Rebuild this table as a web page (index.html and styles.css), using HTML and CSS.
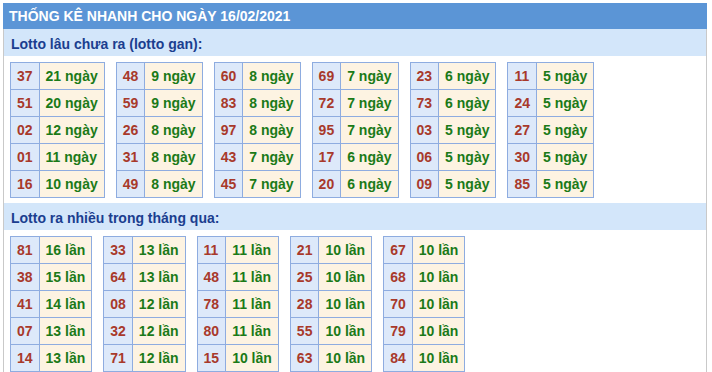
FILE: index.html
```
<!DOCTYPE html>
<html lang="vi">
<head>
    <meta charset="UTF-8">
    <title>Thống kê nhanh</title>
    <link rel="stylesheet" href="styles.css">
</head>
<body>
    <div class="box">
        <div class="box-title">THỐNG KÊ NHANH CHO NGÀY 16/02/2021</div>

        <!-- Lotto gan -->
        <div class="section-head">Lotto lâu chưa ra (lotto gan):</div>
        <div class="tables">
            <table class="stat">
                <tr><td class="num">37</td><td class="val">21 ngày</td></tr>
                <tr><td class="num">51</td><td class="val">20 ngày</td></tr>
                <tr><td class="num">02</td><td class="val">12 ngày</td></tr>
                <tr><td class="num">01</td><td class="val">11 ngày</td></tr>
                <tr><td class="num">16</td><td class="val">10 ngày</td></tr>
            </table>
            <table class="stat">
                <tr><td class="num">48</td><td class="val">9 ngày</td></tr>
                <tr><td class="num">59</td><td class="val">9 ngày</td></tr>
                <tr><td class="num">26</td><td class="val">8 ngày</td></tr>
                <tr><td class="num">31</td><td class="val">8 ngày</td></tr>
                <tr><td class="num">49</td><td class="val">8 ngày</td></tr>
            </table>
            <table class="stat">
                <tr><td class="num">60</td><td class="val">8 ngày</td></tr>
                <tr><td class="num">83</td><td class="val">8 ngày</td></tr>
                <tr><td class="num">97</td><td class="val">8 ngày</td></tr>
                <tr><td class="num">43</td><td class="val">7 ngày</td></tr>
                <tr><td class="num">45</td><td class="val">7 ngày</td></tr>
            </table>
            <table class="stat">
                <tr><td class="num">69</td><td class="val">7 ngày</td></tr>
                <tr><td class="num">72</td><td class="val">7 ngày</td></tr>
                <tr><td class="num">95</td><td class="val">7 ngày</td></tr>
                <tr><td class="num">17</td><td class="val">6 ngày</td></tr>
                <tr><td class="num">20</td><td class="val">6 ngày</td></tr>
            </table>
            <table class="stat">
                <tr><td class="num">23</td><td class="val">6 ngày</td></tr>
                <tr><td class="num">73</td><td class="val">6 ngày</td></tr>
                <tr><td class="num">03</td><td class="val">5 ngày</td></tr>
                <tr><td class="num">06</td><td class="val">5 ngày</td></tr>
                <tr><td class="num">09</td><td class="val">5 ngày</td></tr>
            </table>
            <table class="stat">
                <tr><td class="num">11</td><td class="val">5 ngày</td></tr>
                <tr><td class="num">24</td><td class="val">5 ngày</td></tr>
                <tr><td class="num">27</td><td class="val">5 ngày</td></tr>
                <tr><td class="num">30</td><td class="val">5 ngày</td></tr>
                <tr><td class="num">85</td><td class="val">5 ngày</td></tr>
            </table>
        </div>

        <!-- Lotto ra nhieu -->
        <div class="section-head">Lotto ra nhiều trong tháng qua:</div>
        <div class="tables">
            <table class="stat">
                <tr><td class="num">81</td><td class="val">16 lần</td></tr>
                <tr><td class="num">38</td><td class="val">15 lần</td></tr>
                <tr><td class="num">41</td><td class="val">14 lần</td></tr>
                <tr><td class="num">07</td><td class="val">13 lần</td></tr>
                <tr><td class="num">14</td><td class="val">13 lần</td></tr>
            </table>
            <table class="stat">
                <tr><td class="num">33</td><td class="val">13 lần</td></tr>
                <tr><td class="num">64</td><td class="val">13 lần</td></tr>
                <tr><td class="num">08</td><td class="val">12 lần</td></tr>
                <tr><td class="num">32</td><td class="val">12 lần</td></tr>
                <tr><td class="num">71</td><td class="val">12 lần</td></tr>
            </table>
            <table class="stat">
                <tr><td class="num">11</td><td class="val">11 lần</td></tr>
                <tr><td class="num">48</td><td class="val">11 lần</td></tr>
                <tr><td class="num">78</td><td class="val">11 lần</td></tr>
                <tr><td class="num">80</td><td class="val">11 lần</td></tr>
                <tr><td class="num">15</td><td class="val">10 lần</td></tr>
            </table>
            <table class="stat">
                <tr><td class="num">21</td><td class="val">10 lần</td></tr>
                <tr><td class="num">25</td><td class="val">10 lần</td></tr>
                <tr><td class="num">28</td><td class="val">10 lần</td></tr>
                <tr><td class="num">55</td><td class="val">10 lần</td></tr>
                <tr><td class="num">63</td><td class="val">10 lần</td></tr>
            </table>
            <table class="stat">
                <tr><td class="num">67</td><td class="val">10 lần</td></tr>
                <tr><td class="num">68</td><td class="val">10 lần</td></tr>
                <tr><td class="num">70</td><td class="val">10 lần</td></tr>
                <tr><td class="num">79</td><td class="val">10 lần</td></tr>
                <tr><td class="num">84</td><td class="val">10 lần</td></tr>
            </table>
        </div>
    </div>
</body>
</html>
```

FILE: styles.css
```
* {
    margin: 0;
    padding: 0;
    box-sizing: border-box;
}

body {
    font-family: Arial, "Liberation Sans", sans-serif;
    font-size: 14px;
    background-color: #fff;
    padding: 3px 0 0 3px;
}

.box {
    width: 704px;
    border-left: 1px solid #c9c9c9;
    border-right: 1px solid #c9c9c9;
}

.box-title {
    margin: 0 -1px;
    padding: 5px 6px 5px;
    line-height: 16px;
    background-color: #5b95d6;
    color: #fff;
    font-weight: bold;
}

.section-head {
    padding: 7px 7px 4px;
    line-height: 16px;
    background-color: #d3e6fa;
    color: #1b3e8f;
    font-weight: bold;
}

.tables {
    display: flex;
    flex-wrap: wrap;
    gap: 11px;
    padding: 6px 6px 5px;
}

/* number / count pairs */
.stat {
    border-collapse: collapse;
    font-weight: bold;
}

.stat td {
    border: 1px solid #8eace0;
    padding: 5px 6px 5px;
    line-height: 16px;
}

.num {
    background-color: #dde9fa;
    color: #a8392b;
}

.val {
    background-color: #fdf3e2;
    color: #1b7a18;
}
```
